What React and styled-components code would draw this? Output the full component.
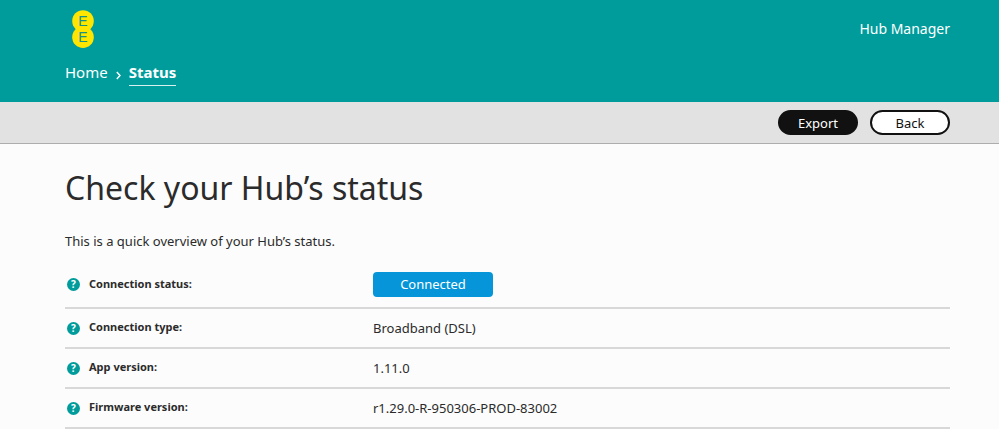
import React from "react";
import styled, { createGlobalStyle, css } from "styled-components";

const Global = createGlobalStyle`
  * { box-sizing: border-box; }
  body {
    margin: 0;
    background: #fcfcfc;
    color: #2b2b2b;
    font-family: "Noto Sans", sans-serif;
    font-size: 13px;
    line-height: 20px;
  }
`;

const gutters = css`
  padding-left: 65px;
  padding-right: 49px;
`;

const Header = styled.header`
  ${gutters}
  display: flex;
  justify-content: space-between;
  align-items: flex-start;
  padding-top: 10px;
  padding-bottom: 16px;
  background: #009c9b;
  color: #fff;
`;

const Brand = styled.div`
  display: flex;
  flex-direction: column;
  gap: 14px;
`;

const Logo = styled.svg`
  display: block;
  width: 24px;
  height: 38px;
  margin-left: 6px;
`;

const LogoLetter = styled.text`
  fill: #16908a;
  font-family: "Liberation Sans", sans-serif;
  font-size: 14px;
  text-anchor: middle;
`;

const Breadcrumb = styled.nav`
  display: flex;
  align-items: flex-start;
  gap: 8px;
  font-size: 15px;
  line-height: 20px;
`;

const Crumb = styled.a`
  color: #fff;
  text-decoration: none;
  padding-bottom: 3px;
  border-bottom: 1px solid ${(p) => (p.$current ? "#d9f0f0" : "transparent")};
  font-weight: ${(p) => (p.$current ? 700 : 400)};
`;

const Chevron = styled.svg`
  width: 5px;
  height: 9px;
  margin-top: 9px;
`;

const Product = styled.span`
  margin-top: 9px;
  font-size: 14px;
  line-height: 20px;
`;

const Toolbar = styled.div`
  ${gutters}
  display: flex;
  justify-content: flex-end;
  gap: 12px;
  padding-top: 8px;
  padding-bottom: 8px;
  background: #e2e2e2;
  border-bottom: 1px solid #adadad;
`;

const PillButton = styled.button`
  width: 80px;
  height: 25px;
  padding: 0;
  border: 2px solid #111;
  border-radius: 13px;
  background: ${(p) => (p.$filled ? "#111" : "#fff")};
  color: ${(p) => (p.$filled ? "#fff" : "#111")};
  font: inherit;
  line-height: 20px;
`;

const Main = styled.main`
  ${gutters}
  padding-top: 24px;
`;

const Title = styled.h1`
  margin: 0;
  font-size: 32px;
  line-height: 40px;
  font-weight: 400;
`;

const Intro = styled.p`
  margin: 23px 0 11px;
  font-size: 13px;
`;

const StatusTable = styled.table`
  width: 100%;
  border-collapse: separate;
  border-spacing: 0;
  table-layout: fixed;
`;

const Label = styled.th`
  width: 308px;
  height: 40px;
  padding: 0;
  border-bottom: 2px solid #d8d8d8;
  text-align: left;
  font-size: 11px;
`;

const LabelContent = styled.div`
  display: flex;
  align-items: center;
  gap: 9px;
  padding-left: 2px;
`;

const LabelText = styled.span`
  padding-bottom: 2px;
`;

const Value = styled.td`
  padding: ${(p) => (p.$roomy ? "10px 0" : "0")};
  border-bottom: 2px solid #d8d8d8;
`;

const HelpButton = styled.button`
  width: 13px;
  height: 13px;
  padding: 0;
  border: 0;
  border-radius: 50%;
  background: #009c9b;
  color: #fff;
  font: inherit;
  font-size: 10px;
  line-height: 13px;
  text-align: center;
`;

const Badge = styled.span`
  display: block;
  width: 120px;
  border-radius: 4px;
  background: #0595d8;
  color: #fff;
  line-height: 25px;
  text-align: center;
`;

const rows = [
  { label: "Connection status:", value: "Connected", badge: true },
  { label: "Connection type:", value: "Broadband (DSL)" },
  { label: "App version:", value: "1.11.0" },
  { label: "Firmware version:", value: "r1.29.0-R-950306-PROD-83002" },
];

export default function App() {
  return (
    <>
      <Global />
      <Header>
        <Brand>
          <Logo viewBox="0 0 24 38" role="img" aria-label="EE">
            <circle cx="12" cy="11" r="10.8" fill="#ffe600" />
            <circle cx="12" cy="27.2" r="10.8" fill="#ffe600" />
            <LogoLetter x="12" y="16">E</LogoLetter>
            <LogoLetter x="12" y="32">E</LogoLetter>
          </Logo>
          <Breadcrumb aria-label="Breadcrumb">
            <Crumb href="#home">Home</Crumb>
            <Chevron viewBox="0 0 5 9" aria-hidden="true">
              <path d="M0.8 1 4 4.5 0.8 8" fill="none" stroke="#fff" strokeWidth="1.4" />
            </Chevron>
            <Crumb href="#status" $current aria-current="page">Status</Crumb>
          </Breadcrumb>
        </Brand>
        <Product>Hub Manager</Product>
      </Header>
      <Toolbar>
        <PillButton type="button" $filled>Export</PillButton>
        <PillButton type="button">Back</PillButton>
      </Toolbar>
      <Main>
        <Title>Check your Hub’s status</Title>
        <Intro>This is a quick overview of your Hub’s status.</Intro>
        <StatusTable>
          <tbody>
            {rows.map((row) => (
              <tr key={row.label}>
                <Label scope="row">
                  <LabelContent>
                    <HelpButton type="button" aria-label={`Help: ${row.label}`}>?</HelpButton>
                    <LabelText>{row.label}</LabelText>
                  </LabelContent>
                </Label>
                <Value $roomy={row.badge}>
                  {row.badge ? <Badge>{row.value}</Badge> : row.value}
                </Value>
              </tr>
            ))}
          </tbody>
        </StatusTable>
      </Main>
    </>
  );
}
